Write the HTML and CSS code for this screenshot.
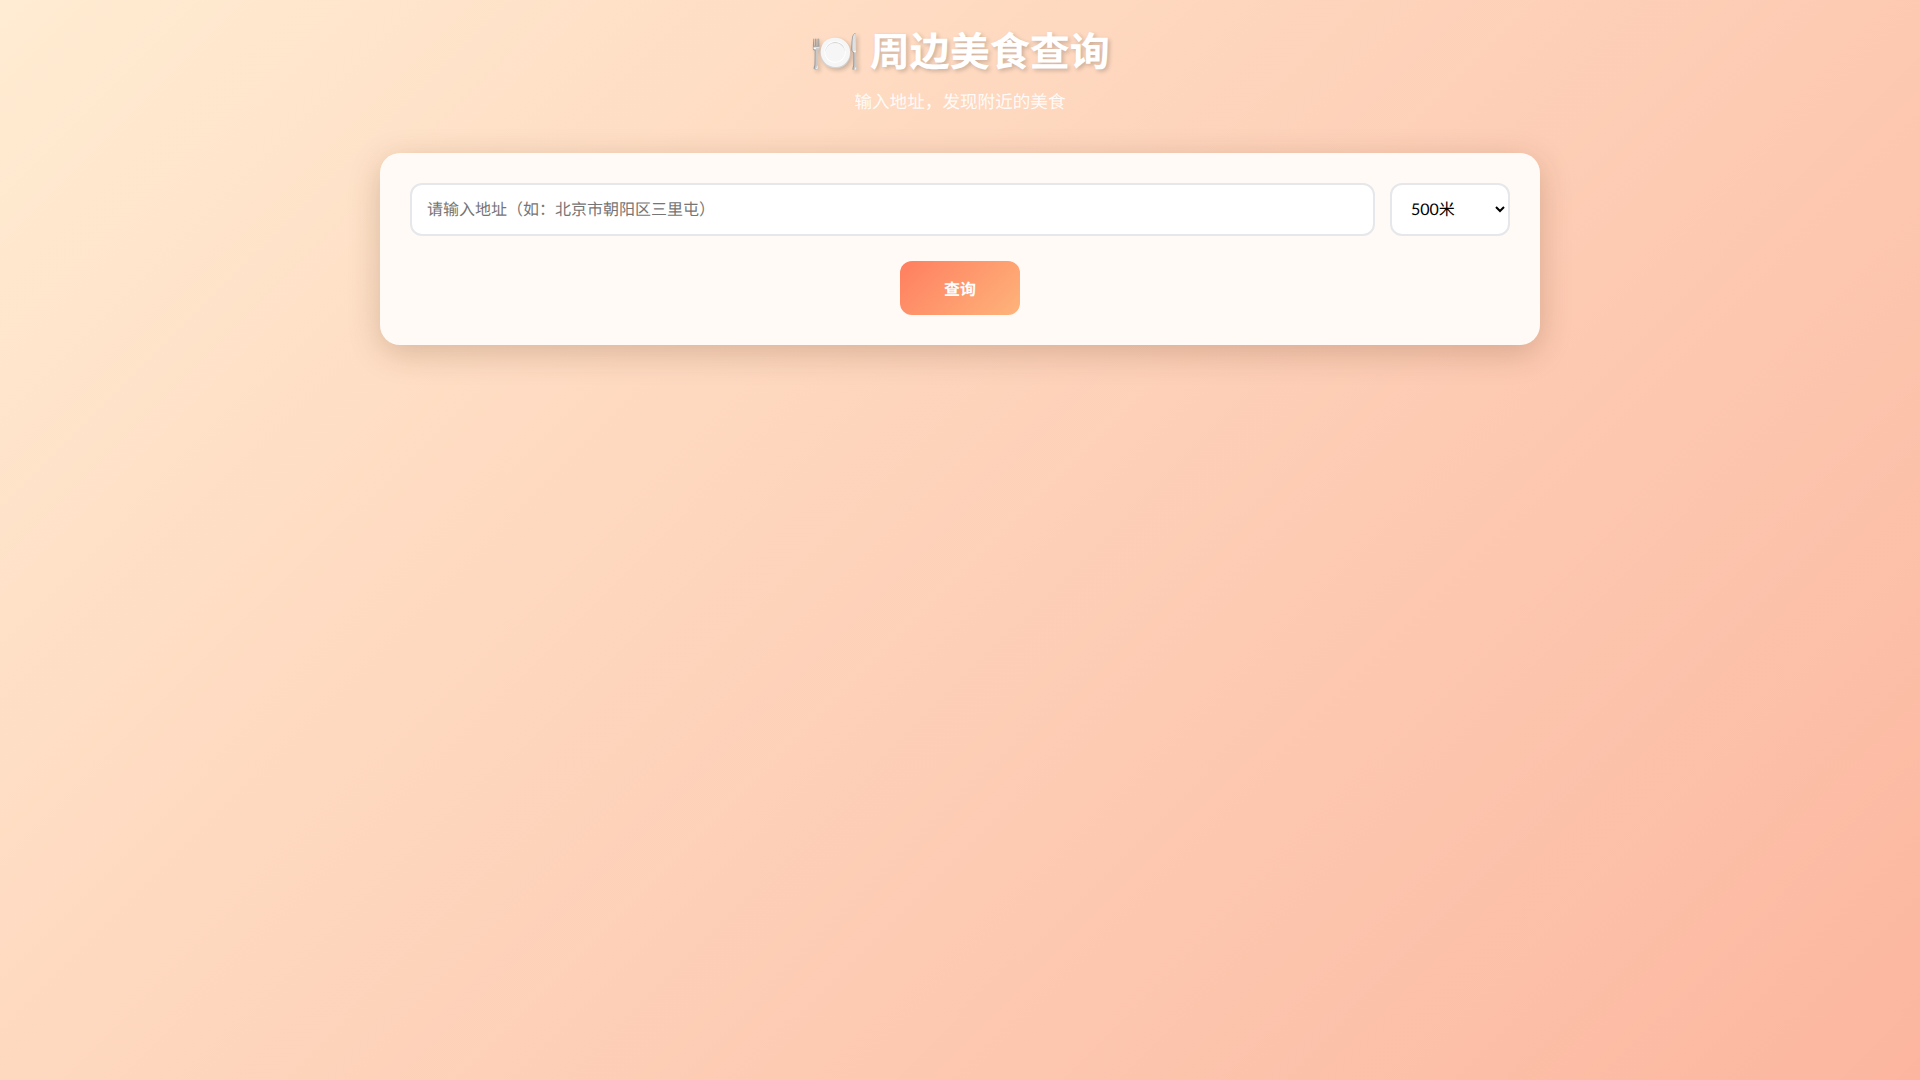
FILE: index.html
```
<!DOCTYPE html>
<html lang="zh-CN">
<head>
<meta charset="utf-8">
<title>周边美食查询</title>
<link rel="stylesheet" href="styles.css">
</head>
<body>
<div class="container">
  <header class="header">
    <h1>🍽️ 周边美食查询</h1>
    <p>输入地址，发现附近的美食</p>
  </header>
  <section class="card">
    <div class="row">
      <input class="address" type="text" placeholder="请输入地址（如：北京市朝阳区三里屯）">
      <select class="radius">
        <option>500米</option>
        <option>1000米</option>
        <option>2000米</option>
      </select>
    </div>
    <button class="search" type="button">查询</button>
  </section>
</div>
</body>
</html>
```
FILE: styles.css
```
* { margin: 0; padding: 0; box-sizing: border-box; }
html, body { height: 100%; }
body {
  font-family: Lato, "Noto Sans CJK SC", sans-serif;
  text-rendering: geometricPrecision;
  background: linear-gradient(135deg, #ffecd2 0%, #fcb69f 100%);
  min-height: 100vh;
  padding: 20px;
}
.container { max-width: 1160px; margin: 0 auto; }
.header { text-align: center; margin-bottom: 37px; color: #fff; }
.header h1 {
  font-size: 40px;
  font-weight: 700;
  margin-bottom: 10px;
  text-shadow: 2px 2px 4px rgba(0, 0, 0, 0.2);
}
.header p { font-size: 17.6px; line-height: 27.5px; opacity: 0.9; }
.card {
  background: #fffaf6;
  border-radius: 20px;
  padding: 30px;
  box-shadow: 0 8px 32px rgba(80, 40, 10, 0.22);
  text-align: center;
}
.row { display: flex; gap: 15px; margin-bottom: 25px; }
.address, .radius {
  height: 53px;
  padding: 0 15px;
  font-size: 16px;
  font-family: inherit;
  text-rendering: geometricPrecision;
  border: 2px solid #e5e7eb;
  border-radius: 12px;
  background: #fff;
  outline: none;
}
.address { flex: 1; min-width: 0; }
.radius { width: 120px; color: #000; }
.search {
  width: 120px;
  height: 54px;
  border: none;
  border-radius: 12px;
  font-family: inherit;
  text-rendering: geometricPrecision;
  font-size: 16px;
  font-weight: 700;
  color: #fff;
  background: linear-gradient(135deg, #ff7e5f, #feb47b);
}
```
